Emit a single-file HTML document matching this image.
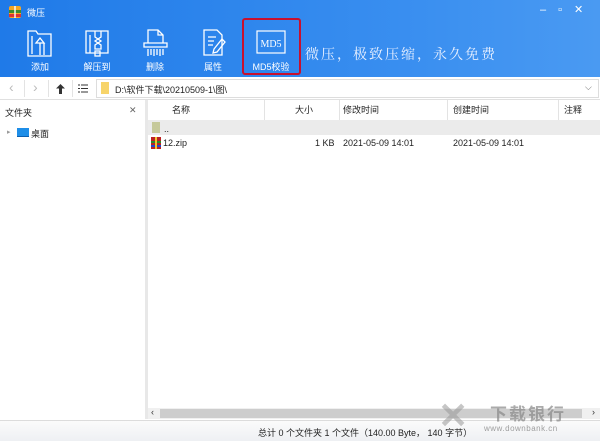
<!DOCTYPE html>
<html><head><meta charset="utf-8"><style>
*{margin:0;padding:0;box-sizing:border-box}
body{width:600px;height:441px;overflow:hidden;font-family:"Liberation Sans","Noto Sans CJK SC",sans-serif;font-size:9px;color:#222;background:#fff;position:relative}
.top{position:absolute;left:0;top:0;width:600px;height:77px;background:linear-gradient(90deg,#1f7ae8,#3a8ff0 70%,#4a9af2)}
.abs{position:absolute}
.tb{position:absolute;top:27px;width:50px;text-align:center;color:#fff;font-size:9px;line-height:12px}
.tb svg{display:block;margin:0 auto 2px}
.col{position:absolute;top:100px;height:20px;line-height:20px;border-right:1px solid #e3e3e3;font-size:9px}
</style></head><body>
<div class="top"></div>
<svg class="abs" style="left:8px;top:5px" width="14" height="14"><rect x="1" y="1" width="12" height="12" rx="2" fill="#f6a623"/><rect x="1" y="5" width="12" height="3" fill="#3d8a2e"/><rect x="1" y="9" width="12" height="3" fill="#d33"/><rect x="6" y="1" width="2" height="12" fill="#fff" opacity=".7"/></svg>
<div class="abs" style="left:27px;top:6px;color:#fff;font-size:9px">微压</div>
<div class="abs" style="left:540px;top:3px;color:#fff;font-size:11px;letter-spacing:12px">–▫✕</div>
<div class="tb" style="left:15px"><svg width="30" height="32" fill="none" stroke="#fff" stroke-width="1.3"><path d="M3 4h8l2 3h13v22H3z"/><path d="M7 9v18M15 28V16l-4 0 4-5 4 5h-4M19 16v12"/></svg>添加</div>
<div class="tb" style="left:72px"><svg width="30" height="32" fill="none" stroke="#fff" stroke-width="1.3"><path d="M4 4h22v22H4zM8 8v18"/><path d="M13 4v6l3 2-3 2 3 2-3 2v4h6v-4l-3-2 3-2-3-2 3-2V4"/><rect x="13" y="24" width="5" height="5"/></svg>解压到</div>
<div class="tb" style="left:130px"><svg width="30" height="32" fill="none" stroke="#fff" stroke-width="1.3"><path d="M8 3h10l5 5v8H8zM18 3v5h5M4 16h23v4H4zM8 22v7M11 22v6M14 22v7M17 22v6M20 22v7M23 22v6"/></svg>删除</div>
<div class="tb" style="left:188px"><svg width="30" height="32" fill="none" stroke="#fff" stroke-width="1.3"><path d="M6 3h13l5 5v20H6zM10 10h8M10 14h6M10 18h5"/><path d="M24 12l3 3-8 10-4 1 1-4z"/></svg>属性</div>
<div class="tb" style="left:241px;width:60px"><svg width="30" height="32" fill="none" stroke="#fff" stroke-width="1.2"><rect x="1" y="4" width="28" height="22"/><text x="15" y="20" fill="#fff" stroke="none" font-size="10" text-anchor="middle" font-family="Liberation Serif">MD5</text></svg>MD5校验</div>
<div class="abs" style="left:242px;top:18px;width:59px;height:57px;border:2.5px solid #c8102e;border-radius:3px"></div>
<div class="abs" style="left:305px;top:44px;color:#e8f0ff;font-size:14px;letter-spacing:2px;font-family:'Noto Serif CJK SC',serif">微压，极致压缩，永久免费</div>
<div class="abs" style="left:0;top:77px;width:600px;height:23px;background:#fff;border-bottom:1px solid #e0e0e0"></div>
<div class="abs" style="left:9px;top:79px;color:#bbb;font-size:14px">‹</div>
<div class="abs" style="left:24px;top:80px;width:1px;height:17px;background:#e3e3e3"></div>
<div class="abs" style="left:33px;top:79px;color:#bbb;font-size:14px">›</div>
<div class="abs" style="left:48px;top:80px;width:1px;height:17px;background:#e3e3e3"></div>
<svg class="abs" style="left:56px;top:84px" width="9" height="10"><path d="M4.5 0L0 4.5h3V10h3V4.5h3z" fill="#333"/></svg>
<div class="abs" style="left:72px;top:80px;width:1px;height:17px;background:#e3e3e3"></div>
<svg class="abs" style="left:78px;top:84px" width="10" height="9" stroke="#333"><path d="M0 1h2M3 1h7M0 4.5h2M3 4.5h7M0 8h2M3 8h7"/></svg>
<div class="abs" style="left:96px;top:79px;width:503px;height:19px;border:1px solid #ddd"></div>
<div class="abs" style="left:101px;top:82px;width:8px;height:12px;background:#f7d46a"></div>
<div class="abs" style="left:115px;top:83px;font-size:9px">D:\软件下载\20210509-1\图\</div>
<div class="abs" style="left:585px;top:82px;color:#666;font-size:9px">⌵</div>
<div class="abs" style="left:145px;top:100px;width:3px;height:319px;background:#e8e8e8"></div>
<div class="abs" style="left:5px;top:106px">文件夹</div>
<div class="abs" style="left:129px;top:105px;color:#666">✕</div>
<div class="abs" style="left:7px;top:128px;color:#999;font-size:7px">▸</div>
<div class="abs" style="left:17px;top:128px;width:12px;height:9px;background:#1e8ee8;border-bottom:1px solid #0b5fb0"></div>
<div class="abs" style="left:31px;top:127px">桌面</div>
<div class="col" style="left:148px;width:117px;padding-left:24px">名称</div>
<div class="col" style="left:265px;width:75px;text-align:right;padding-right:26px">大小</div>
<div class="col" style="left:340px;width:108px;padding-left:3px">修改时间</div>
<div class="col" style="left:448px;width:111px;padding-left:5px">创建时间</div>
<div class="col" style="left:559px;width:41px;padding-left:5px;border:none">注释</div>
<div class="abs" style="left:148px;top:120px;width:452px;height:15px;background:#ebebeb"></div>
<div class="abs" style="left:152px;top:122px;width:8px;height:11px;background:#c6c99a"></div>
<div class="abs" style="left:164px;top:124px">..</div>
<svg class="abs" style="left:151px;top:137px" width="10" height="12"><rect width="10" height="12" fill="#b22"/><rect y="4" width="10" height="2" fill="#2a8a2a"/><rect y="8" width="10" height="2" fill="#2346c8"/><rect x="4" width="2" height="12" fill="#f4c430"/></svg>
<div class="abs" style="left:163px;top:138px">12.zip</div>
<div class="abs" style="left:315px;top:138px">1 KB</div>
<div class="abs" style="left:343px;top:138px">2021-05-09 14:01</div>
<div class="abs" style="left:453px;top:138px">2021-05-09 14:01</div>
<div class="abs" style="left:148px;top:408px;width:452px;height:11px;background:#f0f0f0"></div>
<div class="abs" style="left:160px;top:409px;width:422px;height:9px;background:#cdcdcd"></div>
<div class="abs" style="left:151px;top:407px;font-size:9px;color:#333">‹</div>
<div class="abs" style="left:592px;top:407px;font-size:9px;color:#333">›</div>
<div class="abs" style="left:0;top:420px;width:600px;height:21px;background:linear-gradient(#fbfbfb,#eef0f3);border-top:1px solid #dcdcdc"></div>
<div class="abs" style="left:258px;top:426px;font-size:9px">总计 0 个文件夹 1 个文件（140.00 Byte， 140 字节）</div>
<div class="abs" style="left:438px;top:398px;color:#999;font-size:36px;font-weight:bold;opacity:.55;line-height:36px">✕</div>
<div class="abs" style="left:490px;top:400px;color:#888;font-size:17px;font-weight:bold;opacity:.7;letter-spacing:2px">下载银行</div>
<div class="abs" style="left:484px;top:424px;color:#888;font-size:8px;opacity:.8;letter-spacing:.5px">www.downbank.cn</div>
</body></html>
